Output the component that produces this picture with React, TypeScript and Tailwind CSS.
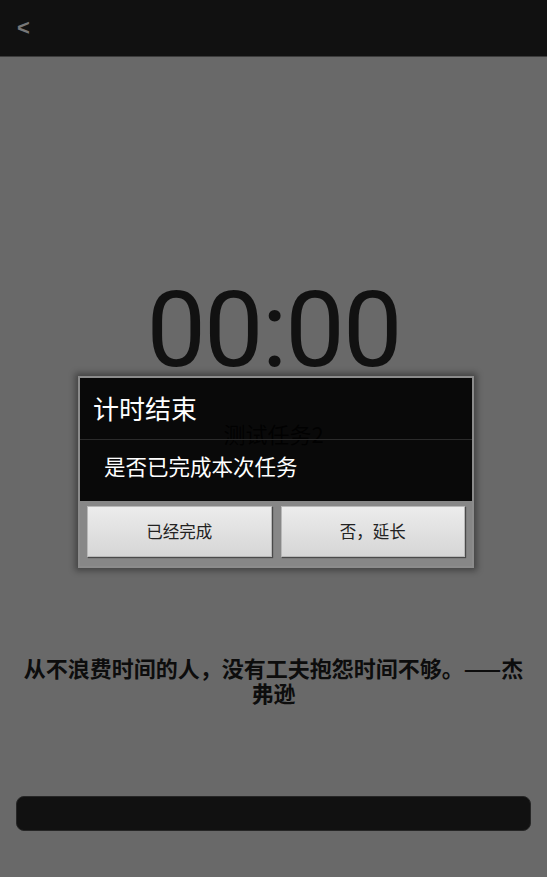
const cjk = "font-['Noto_Sans_CJK_SC','Noto_Sans',sans-serif]";

function TimerDialog() {
  return (
    <div className="absolute left-[78px] top-[376px] w-[396px] border-2 border-[#8c8c8c] shadow-[0_0_6px_3px_rgba(0,0,0,0.35)]">
      <div className="bg-[rgba(0,0,0,0.91)]">
        <div className={`h-[62px] flex items-center pl-[13px] pb-[2px] text-white text-[26px] border-b border-[#2b2b2b] ${cjk}`}>
          计时结束
        </div>
        <div className={`h-[61px] flex items-center pl-[24px] pb-[9px] text-white text-[21.5px] ${cjk}`}>
          是否已完成本次任务
        </div>
      </div>
      <div className="bg-[#878787] flex gap-[9px] px-[7px] pt-[5px] pb-[9px]">
        <button className={`flex-1 h-[51px] bg-gradient-to-b from-[#ececec] to-[#d6d6d6] border border-[#b8b8b8] shadow-[1px_1px_1px_rgba(0,0,0,0.45)] text-[16.5px] text-[#222] ${cjk}`}>
          已经完成
        </button>
        <button className={`flex-1 h-[51px] bg-gradient-to-b from-[#ececec] to-[#d6d6d6] border border-[#b8b8b8] shadow-[1px_1px_1px_rgba(0,0,0,0.45)] text-[16.5px] text-[#222] ${cjk}`}>
          否，延长
        </button>
      </div>
    </div>
  );
}

export default function App() {
  return (
    <div className="relative w-full h-[877px] bg-[#696969] flex flex-col overflow-hidden">
      {/* action bar */}
      <div className="h-[57px] bg-[#111111] border-b border-[#3c3c3c] flex items-center pl-[17px]">
        <span className="text-[#777] text-[22px] font-bold font-['Liberation_Sans',sans-serif] leading-none">&lt;</span>
      </div>

      {/* timer */}
      <div className="mt-[220px] text-center text-[#111] text-[106px] leading-none font-['Roboto',sans-serif] font-normal tracking-[-2px]">
        00:00
      </div>
      <div className={`mt-[34px] text-center text-[#111] text-[22px] ${cjk}`}>测试任务2</div>

      {/* quote */}
      <div className={`mt-[205px] px-[15px] text-center text-[#0d0d0d] text-[22px] font-bold leading-[25px] ${cjk}`}>
        从不浪费时间的人，没有工夫抱怨时间不够。——杰弗逊
      </div>

      <div className="mt-auto mb-[46px] mx-[16px] h-[35px] rounded-[8px] bg-[#111111] border border-[#262626]" />

      <TimerDialog />
    </div>
  );
}
